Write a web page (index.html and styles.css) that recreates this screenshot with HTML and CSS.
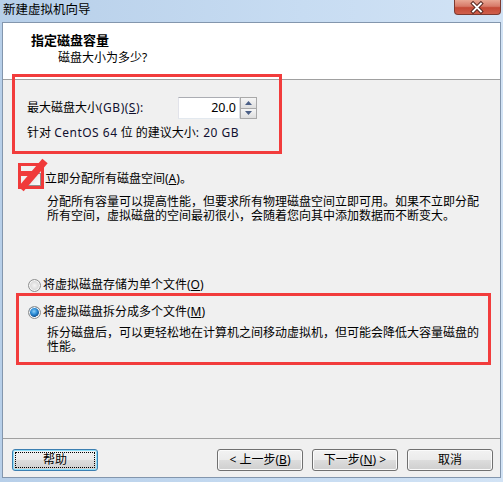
FILE: index.html
```html
<!DOCTYPE html>
<html lang="zh-CN">
<head>
<meta charset="utf-8">
<title>新建虚拟机向导</title>
<link rel="stylesheet" href="styles.css">
</head>
<body>
<div class="window">
  <div class="titlebar">
    <span class="title">新建虚拟机向导</span>
    <div class="close" aria-label="关闭">
      <svg width="47" height="15" viewBox="0 0 47 15">
        <path d="M19.5 3.5 L27.5 11.5 M27.5 3.5 L19.5 11.5" stroke="#5a2a22" stroke-width="4" stroke-linecap="square" fill="none"/>
        <path d="M19.5 3.5 L27.5 11.5 M27.5 3.5 L19.5 11.5" stroke="#ffffff" stroke-width="2" stroke-linecap="square" fill="none"/>
      </svg>
    </div>
  </div>
  <div class="client">
    <div class="header">
      <div class="h-title">指定磁盘容量</div>
      <div class="h-sub">磁盘大小为多少?</div>
    </div>
    <div class="content">
      <div class="size-row">
        <span class="size-label">最大磁盘大小<span class="latin">(GB)(<u>S</u>):</span></span>
        <div class="spin">
          <div class="spin-input">20.0</div>
          <div class="spin-btns">
            <div class="spin-btn"><svg width="7" height="4" viewBox="0 0 7 4"><path d="M0 4 L3.5 0 L7 4 Z" fill="#4b5f86"/></svg></div>
            <div class="spin-btn"><svg width="7" height="4" viewBox="0 0 7 4"><path d="M0 0 L3.5 4 L7 0 Z" fill="#4b5f86"/></svg></div>
          </div>
        </div>
      </div>
      <div class="recommend">针对 <span class="latin">CentOS 64</span> 位 的建议大小<span class="latin">: 20 GB</span></div>

      <div class="check-row">
        <span class="checkbox"></span>
        <span>立即分配所有磁盘空间(<u>A</u>)。</span>
        <svg class="mark" width="26" height="26" viewBox="0 0 26 26">
          <rect x="1.5" y="1.5" width="23" height="23" fill="none" stroke="#f03a3a" stroke-width="3"/>
          <rect x="0" y="8" width="16" height="5" fill="#f03a3a"/>
          <path d="M3 26 L27 -2" stroke="#f03a3a" stroke-width="7" fill="none"/>
        </svg>
      </div>
      <div class="desc">分配所有容量可以提高性能，但要求所有物理磁盘空间立即可用。如果不立即分配所有空间，虚拟磁盘的空间最初很小，会随着您向其中添加数据而不断变大。</div>

      <div class="radio-row first">
        <span class="radio"></span>
        <span>将虚拟磁盘存储为单个文件(<u>O</u>)</span>
      </div>
      <div class="radio-row second">
        <span class="radio checked"></span>
        <span>将虚拟磁盘拆分成多个文件(<u>M</u>)</span>
      </div>
      <div class="desc desc2">拆分磁盘后，可以更轻松地在计算机之间移动虚拟机，但可能会降低大容量磁盘的性能。</div>
    </div>
    <div class="footer">
      <div class="btn default"><span class="focus">帮助</span></div>
      <div class="btn nav">&lt; 上一步(<u>B</u>)</div>
      <div class="btn">下一步(<u>N</u>) &gt;</div>
      <div class="btn">取消</div>
    </div>
  </div>
  <div class="annot annot-size"></div>
  <div class="annot annot-split"></div>
</div>
</body>
</html>
```

FILE: styles.css
```css
* { box-sizing: border-box; }
html, body { margin: 0; padding: 0; }
body {
  width: 503px;
  height: 482px;
  overflow: hidden;
  font-family: "Noto Sans", "Noto Sans CJK SC", sans-serif;
  font-size: 12px;
  color: #000;
  background: #c4d9f0;
}
u { text-decoration: underline; text-underline-offset: 1px; }
.latin { letter-spacing: 0.5px; color: #101030; }

.window {
  position: relative;
  width: 503px;
  height: 482px;
  display: flex;
  flex-direction: column;
  padding: 0 2px 4px 2px;
  background: linear-gradient(90deg, #b7cfe9 0%, #c7dcf2 60%, #d2e3f5 100%);
}

.titlebar {
  height: 22px;
  display: flex;
  align-items: flex-start;
}
.title {
  padding-left: 1px;
  line-height: 20px;
  font-size: 12.5px;
  color: #000;
}
.close {
  margin-left: auto;
  width: 47px;
  height: 15px;
  border: 1px solid #7d3a30;
  border-top: none;
  border-radius: 0 0 4px 4px;
  background: linear-gradient(#e9a894 0%, #d77a68 45%, #c44a36 55%, #d0604c 100%);
  display: flex;
  align-items: center;
  justify-content: center;
  overflow: hidden;
}
.close svg { display: block; margin-left: -1px; }

.client {
  flex: 1;
  display: flex;
  flex-direction: column;
  border: 1px solid #8396ad;
  background: #f0f0f0;
}

.header {
  height: 57px;
  background: #fff;
  border-bottom: 1px solid #a0a0a0;
  padding: 9px 0 0 28px;
}
.h-title {
  font-size: 13px;
  font-weight: bold;
  line-height: 16px;
}
.h-sub {
  margin: 2px 0 0 27px;
  line-height: 16px;
}

.content {
  flex: 1;
  display: flex;
  flex-direction: column;
  padding: 0 14px 0 24px;
}

.size-row {
  margin-top: 17px;
  height: 22px;
  display: flex;
  align-items: center;
}
.size-label { width: 151px; line-height: 16px; }
.spin { display: flex; height: 22px; }
.spin-input {
  width: 62px;
  height: 22px;
  background: #fff;
  border: 1px solid;
  border-color: #abadb3 #dbdfe6 #e3e9ef #e2e3ea;
  text-align: right;
  padding-right: 3px;
  line-height: 20px;
  font-size: 12.5px;
}
.spin-btns {
  width: 17px;
  display: flex;
  flex-direction: column;
}
.spin-btn {
  flex: 1;
  border: 1px solid #a9a9a9;
  background: linear-gradient(#f6f6f6, #dedede);
  display: flex;
  align-items: center;
  justify-content: center;
}
.spin-btn + .spin-btn { border-top: none; }
.spin-btn svg { display: block; }

.recommend { margin-top: 6px; line-height: 16px; }

.check-row {
  position: relative;
  margin-top: 30px;
  line-height: 16px;
  display: flex;
  align-items: center;
}
.checkbox {
  width: 13px;
  height: 13px;
  margin: 0 4px 0 1px;
  border: 1px solid #8e8f8f;
  background: linear-gradient(135deg, #dcdcdc, #fdfdfd);
}
.mark {
  position: absolute;
  left: -9px;
  top: -8px;
  overflow: visible;
}

.desc {
  margin: 8px 0 0 20px;
  line-height: 14px;
}
.desc2 { margin-top: 6px; }

.radio-row {
  display: flex;
  align-items: center;
  line-height: 16px;
}
.radio-row.first { margin-top: 54px; }
.radio-row.second { margin-top: 11px; }
.radio {
  width: 13px;
  height: 13px;
  margin: 0 2px 0 1px;
  border-radius: 50%;
  border: 1px solid #8e8f8f;
  background: radial-gradient(circle at 50% 50%, #f4f4f4 0%, #dadada 55%, #c8c8c8 100%);
  box-shadow: inset 0 0 0 1px #f8f8f8;
}
.radio.checked {
  background: radial-gradient(circle at 45% 40%, #8fd0f8 0%, #2a8ad4 35%, #16528f 60%, #f2f2f2 64%, #dcdcdc 100%);
}

.footer {
  height: 39px;
  border-top: 1px solid #a0a0a0;
  display: flex;
  align-items: flex-start;
  padding: 10px 7px 0 9px;
  gap: 9px;
}
.btn {
  width: 86px;
  height: 22px;
  border: 1px solid #707070;
  border-radius: 3px;
  background: linear-gradient(#f2f2f2 0%, #ebebeb 50%, #dddddd 50%, #cfcfcf 100%);
  box-shadow: inset 0 0 0 1px #fbfbfb;
  display: flex;
  align-items: center;
  justify-content: center;
  line-height: 16px;
  font-size: 12px;
}
.btn.nav { margin-left: auto; }
.btn.default {
  border-color: #3c7fb1;
  box-shadow: inset 0 0 0 1px #8ee0fb;
  padding: 2px;
}
.focus {
  flex: 1;
  align-self: stretch;
  display: flex;
  align-items: center;
  justify-content: center;
  border: 1px dotted #000;
}

.annot {
  position: absolute;
  border: 3px solid #f23c3c;
  pointer-events: none;
}
.annot-size { left: 12px; top: 74px; width: 270px; height: 80px; }
.annot-split { left: 16px; top: 293px; width: 475px; height: 72px; }
```
